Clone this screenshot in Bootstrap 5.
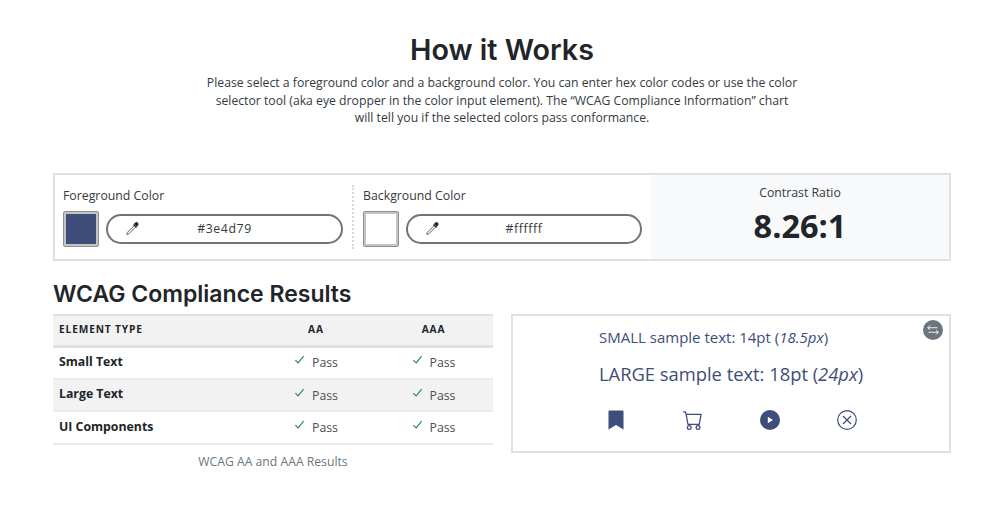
<!DOCTYPE html>
<html lang="en">
<head>
<meta charset="utf-8">
<title>How it Works</title>
<link href="https://cdn.jsdelivr.net/npm/bootstrap@5.3.0/dist/css/bootstrap.min.css" rel="stylesheet">
<style>
body{font-family:"Open Sans",sans-serif;color:#212529;background:#fff;font-size:16px}
.page-wrap{width:898px;margin:0 0 0 53px}
.hero-title{font-family:Inter,sans-serif;font-weight:600;font-size:28.7px;line-height:36px;margin:0;padding-top:32px;text-align:center}
.hero-text{width:591px;margin:6px auto 0;font-size:12.22px;line-height:17.6px;text-align:center;color:#343a40;height:99px}
.picker-panel{height:88px;border:2px solid #dee2e6}
.picker-col{margin:10px 0;padding:0 9px 0 8px;width:297px}
.picker-col+.picker-col{border-left:2px dotted #d5d8db;padding-left:9px;width:299px}
.picker-label{font-size:12.3px;line-height:18px;color:#343a40;margin-top:2px;margin-bottom:6px;height:18px}
.picker-row{gap:7px}
.swatch{width:36px;height:36px;flex:none;border:1px solid #8f8f8f;border-radius:2px;padding:2px;background:#c4c4c4}
.swatch span{display:block;width:100%;height:100%}
.hex-pill{flex:1;height:30px;border:2px solid #6c757d;border-radius:15px;padding:0 16px;font-size:12.3px;color:#343a40;letter-spacing:.6px;background:#fff}
.hex-pill span{flex:1;text-align:center;padding-right:16px}
.ratio-panel{flex:1;background:#f8f9fa;text-align:center}
.ratio-label{font-size:12.3px;line-height:18px;margin-top:9px;color:#343a40}
.ratio-value{font-weight:700;font-size:32.5px;line-height:44px;margin-top:2px;color:#212529}
.results-title{font-family:Inter,sans-serif;font-weight:600;font-size:23px;line-height:30px;margin:18px 0 5px;color:#212529}
.result-col{width:440px}
.result-table{width:440px;margin:0;table-layout:fixed;border-collapse:collapse}
.result-table th,.result-table td{padding:0 6px;vertical-align:middle;font-size:12.3px}
.result-table thead th{height:31px;padding-bottom:1px;background:#f2f2f2;border-top:2px solid #dee2e6;border-bottom:3px solid #dee2e6;font-size:10.2px;font-weight:700;letter-spacing:.85px;color:#212529}
.result-table tbody th{font-weight:700;font-size:12.3px;color:#212529;padding-bottom:1px}
.result-table tbody td{color:#495057;text-align:center;padding-top:2px}
.result-table tbody tr{height:32.5px;border-bottom:2px solid #e9ecef}
.result-table tbody tr:nth-child(even){background:#f2f2f2}
.result-table tbody svg{margin-right:7px;vertical-align:2px}
.result-caption{font-size:12.2px;line-height:18px;text-align:center;color:#6c757d;margin-top:8px}
.sample-panel{width:440px;height:139px;border:2px solid #dee2e6;padding:11px 0 0 86px;color:#3e4d79;position:relative}
.sample-small{font-size:15px;line-height:20px}
.sample-large{font-size:18.35px;line-height:26px;margin-top:14px}
.sample-icons{margin-top:23px;gap:57px;padding-left:7px}
.swap-btn{position:absolute;right:6px;top:4px;width:20px;height:20px;border-radius:50%;background:#6c757d}
</style>
</head>
<body>
<div class="page-wrap">
  <h1 class="hero-title">How it Works</h1>
  <p class="hero-text">Please select a foreground color and a background color. You can enter hex color codes or use the color selector tool (aka eye dropper in the color input element). The “WCAG Compliance Information” chart will tell you if the selected colors pass conformance.</p>

  <div class="picker-panel d-flex">
    <div class="picker-col">
      <div class="picker-label">Foreground Color</div>
      <div class="picker-row d-flex align-items-center">
        <div class="swatch"><span style="background:#3e4d79"></span></div>
        <div class="hex-pill d-flex align-items-center">
          <svg width="16" height="16" viewBox="0 0 16 16" fill="none"><path d="M9.5 3.5l3 3" stroke="#212529" stroke-width="1.6"/><path d="M10 2.8l1.4-1.2a1.7 1.7 0 0 1 2.6.4 1.7 1.7 0 0 1 .2 2.2L13 5.8z" fill="#212529"/><path d="M9.6 5.2L3.4 11.4 2.6 13.2l.4.4 1.8-.8 6.2-6.2" stroke="#495057" stroke-width=".9" fill="#fff"/></svg>
          <span>#3e4d79</span>
        </div>
      </div>
    </div>
    <div class="picker-col">
      <div class="picker-label">Background Color</div>
      <div class="picker-row d-flex align-items-center">
        <div class="swatch"><span style="background:#ffffff"></span></div>
        <div class="hex-pill d-flex align-items-center">
          <svg width="16" height="16" viewBox="0 0 16 16" fill="none"><path d="M9.5 3.5l3 3" stroke="#212529" stroke-width="1.6"/><path d="M10 2.8l1.4-1.2a1.7 1.7 0 0 1 2.6.4 1.7 1.7 0 0 1 .2 2.2L13 5.8z" fill="#212529"/><path d="M9.6 5.2L3.4 11.4 2.6 13.2l.4.4 1.8-.8 6.2-6.2" stroke="#495057" stroke-width=".9" fill="#fff"/></svg>
          <span>#ffffff</span>
        </div>
      </div>
    </div>
    <div class="ratio-panel">
      <div class="ratio-label">Contrast Ratio</div>
      <div class="ratio-value">8.26:1</div>
    </div>
  </div>

  <h2 class="results-title">WCAG Compliance Results</h2>
  <div class="d-flex justify-content-between">
    <div class="result-col">
      <table class="result-table">
        <colgroup><col style="width:205px"><col style="width:116px"><col style="width:119px"></colgroup>
        <thead><tr><th>ELEMENT TYPE</th><th class="text-center">AA</th><th class="text-center">AAA</th></tr></thead>
        <tbody>
          <tr><th>Small Text</th>
            <td><svg width="11" height="11" viewBox="0 0 16 16"><path d="M2 9l4 4 8-10" fill="none" stroke="#198754" stroke-width="1.5"/></svg>Pass</td>
            <td><svg width="11" height="11" viewBox="0 0 16 16"><path d="M2 9l4 4 8-10" fill="none" stroke="#198754" stroke-width="1.5"/></svg>Pass</td></tr>
          <tr><th>Large Text</th>
            <td><svg width="11" height="11" viewBox="0 0 16 16"><path d="M2 9l4 4 8-10" fill="none" stroke="#198754" stroke-width="1.5"/></svg>Pass</td>
            <td><svg width="11" height="11" viewBox="0 0 16 16"><path d="M2 9l4 4 8-10" fill="none" stroke="#198754" stroke-width="1.5"/></svg>Pass</td></tr>
          <tr><th>UI Components</th>
            <td><svg width="11" height="11" viewBox="0 0 16 16"><path d="M2 9l4 4 8-10" fill="none" stroke="#198754" stroke-width="1.5"/></svg>Pass</td>
            <td><svg width="11" height="11" viewBox="0 0 16 16"><path d="M2 9l4 4 8-10" fill="none" stroke="#198754" stroke-width="1.5"/></svg>Pass</td></tr>
        </tbody>
      </table>
      <div class="result-caption">WCAG AA and AAA Results</div>
    </div>
    <div class="sample-panel">
      <div class="sample-small">SMALL sample text: 14pt (<em>18.5px</em>)</div>
      <div class="sample-large">LARGE sample text: 18pt (<em>24px</em>)</div>
      <div class="sample-icons d-flex align-items-center">
        <svg width="20" height="20" viewBox="0 0 20 20"><path d="M2.5 1.5a1 1 0 0 1 1-1h13a1 1 0 0 1 1 1V19.5L10 15 2.5 19.5z" fill="#3e4d79"/></svg>
        <svg width="20" height="20" viewBox="0 0 16 16" fill="#3e4d79"><path d="M0 1.5A.5.5 0 0 1 .5 1H2a.5.5 0 0 1 .485.379L2.89 3H14.5a.5.5 0 0 1 .491.592l-1.5 8A.5.5 0 0 1 13 12H4a.5.5 0 0 1-.491-.408L2.01 3.607 1.61 2H.5a.5.5 0 0 1-.5-.5zM3.102 4l1.313 7h8.17l1.313-7H3.102zM5 12a2 2 0 1 0 0 4 2 2 0 0 0 0-4zm7 0a2 2 0 1 0 0 4 2 2 0 0 0 0-4zm-7 1a1 1 0 1 1 0 2 1 1 0 0 1 0-2zm7 0a1 1 0 1 1 0 2 1 1 0 0 1 0-2z"/></svg>
        <svg width="20" height="20" viewBox="0 0 20 20"><circle cx="10" cy="10" r="10" fill="#3e4d79"/><path d="M7.8 6.8l5.2 3.2-5.2 3.2z" fill="#fff"/></svg>
        <svg width="20" height="20" viewBox="0 0 20 20" fill="none" stroke="#3e4d79"><circle cx="10" cy="10" r="9.3" stroke-width="1.2"/><path d="M6 6l8 8M14 6l-8 8" stroke-width="1.2"/></svg>
      </div>
      <div class="swap-btn d-flex align-items-center justify-content-center">
        <svg width="12" height="12" viewBox="0 0 16 16" fill="none" stroke="#fff" stroke-width="1.2"><path d="M1 5h13M4 2L1 5l3 3M15 11H2M12 8l3 3-3 3"/></svg>
      </div>
    </div>
  </div>
</div>
<script src="https://cdn.jsdelivr.net/npm/bootstrap@5.3.0/dist/js/bootstrap.bundle.min.js"></script>
</body>
</html>
